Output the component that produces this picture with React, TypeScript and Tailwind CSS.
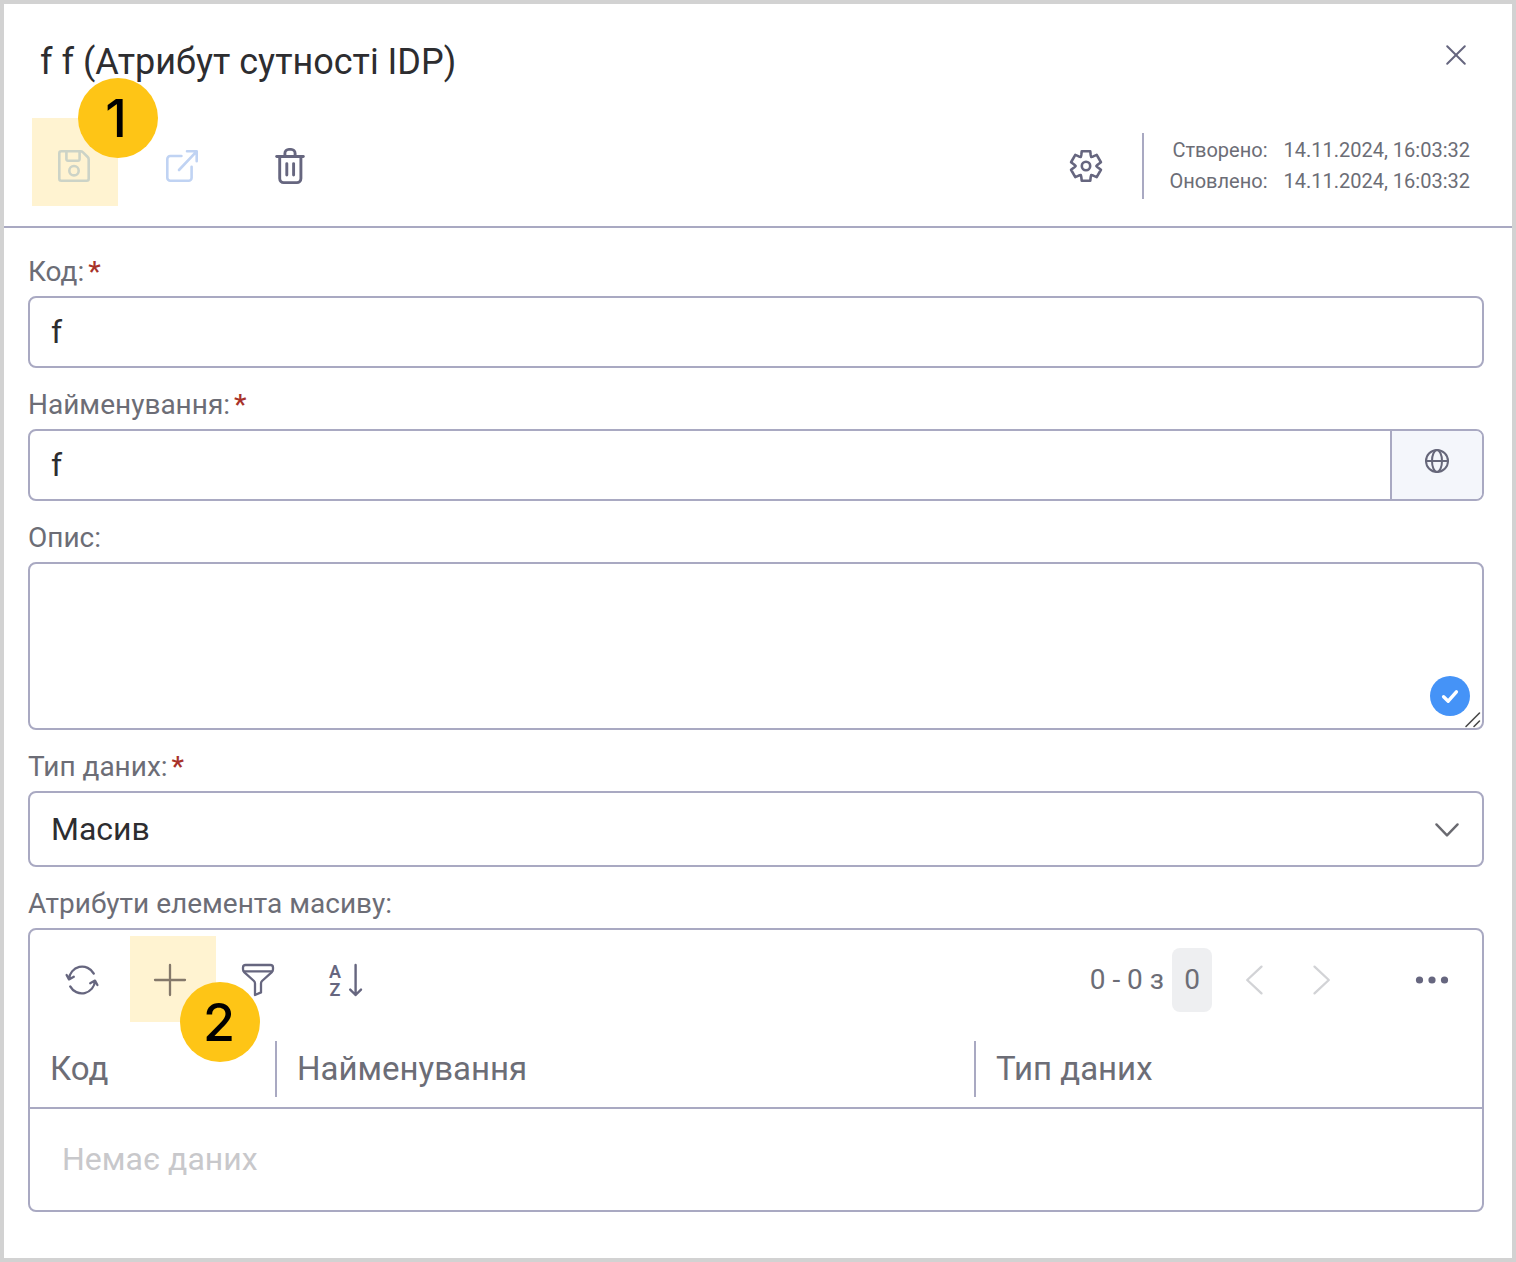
import React from "react";
import clsx from "clsx";

interface IconProps {
  className?: string;
  size?: number;
  stroke?: number;
  children: React.ReactNode;
}

function Icon({ className, size = 36, stroke = 2.6, children }: IconProps) {
  return (
    <svg
      width={size}
      height={size}
      viewBox={`0 0 ${size} ${size}`}
      fill="none"
      stroke="currentColor"
      strokeWidth={stroke}
      strokeLinecap="round"
      strokeLinejoin="round"
      aria-hidden="true"
      className={clsx("shrink-0 overflow-visible", className)}
    >
      {children}
    </svg>
  );
}

// Outline of a six-tooth gear centred in a 36px box
function gearPath() {
  const points: string[] = [];
  for (let i = 0; i < 6; i++) {
    for (const [offset, radius] of [[-23, 12], [-16, 15.4], [16, 15.4], [23, 12], [30, 10.4]]) {
      const angle = ((i * 60 + offset) * Math.PI) / 180;
      points.push(`${(18 + radius * Math.sin(angle)).toFixed(2)} ${(18 - radius * Math.cos(angle)).toFixed(2)}`);
    }
  }
  return `M${points.join("L")}Z`;
}

interface CalloutProps {
  number: number;
  className: string;
  badgeClassName: string;
}

function Callout({ number, className, badgeClassName }: CalloutProps) {
  return (
    <span className={clsx("absolute z-10 bg-[#ffc517]/20 pointer-events-none", className)}>
      <span
        className={clsx(
          "absolute size-20 rounded-full bg-[#fec516] flex items-center justify-center pt-0.5",
          "font-['Inter',sans-serif] text-[52px] leading-none font-medium text-black",
          badgeClassName
        )}
      >
        {number}
      </span>
    </span>
  );
}

interface FieldProps {
  label: string;
  htmlFor: string;
  required?: boolean;
  children: React.ReactNode;
}

function Field({ label, htmlFor, required, children }: FieldProps) {
  return (
    <div className="flex flex-col gap-1.5">
      <label htmlFor={htmlFor} className="text-[28px] leading-[37px] text-[#6c6d76]">
        {label}
        {required && <span className="ml-1 font-medium text-[#a8322a]">*</span>}
      </label>
      {children}
    </div>
  );
}

const box = "w-full border-2 border-[#a9a9c2] rounded-lg bg-white outline-none";
const toolButton = "relative h-22 w-22 flex items-center justify-center text-[#66667f]";
const headerButton = "relative h-22 w-27 flex items-center justify-center text-[#66667f]";

const columns = [
  { title: "Код", width: "w-[245px]" },
  { title: "Найменування", width: "w-[699px]" },
  { title: "Тип даних", width: "w-auto" },
];

export default function App() {
  return (
    <div className="w-full border-4 border-[#d2d2d2] bg-white font-['Roboto',sans-serif] text-[#2d2d30]">
      <header className="border-b-2 border-[#a9a9c2] pb-4">
        <div className="flex h-[118px] items-start justify-between pt-[27px] pl-9 pr-8">
          <h1 className="mt-[9px] text-4xl leading-[44px]">f f (Атрибут сутності IDP)</h1>
          <button type="button" aria-label="Закрити" className="size-12 flex items-center justify-center text-[#66667f]">
            <Icon size={24} stroke={2}>
              <path d="M3.2 3.2l17.6 17.6M20.8 3.2L3.2 20.8" />
            </Icon>
          </button>
        </div>

        <div className="flex items-center pl-4 pr-[42px]">
          <button type="button" aria-label="Зберегти" className={headerButton}>
            <Icon className="text-[#c0d8f3]">
              <path d="M5.3 3.3H24.5Q26 3.3 27 4.3L31.7 9Q32.7 10 32.7 11.4V30.7A2 2 0 0 1 30.7 32.7H5.3A2 2 0 0 1 3.3 30.7V5.3A2 2 0 0 1 5.3 3.3Z" />
              <path d="M10.4 3.6V11.2A1.5 1.5 0 0 0 11.9 12.7H22.1A1.5 1.5 0 0 0 23.6 11.2V3.6" />
              <circle cx="18" cy="22.7" r="4.7" />
            </Icon>
            <Callout number={1} className="left-3 -top-1 w-[86px] h-[88px]" badgeClassName="-top-10 -right-10 pr-1" />
          </button>
          <button type="button" aria-label="Відкрити в новому вікні" className={headerButton}>
            <Icon className="text-[#c0d3f3]">
              <path d="M17.4 8H6.3A3 3 0 0 0 3.3 11V29.7A3 3 0 0 0 6.3 32.7H24.6A3 3 0 0 0 27.6 29.7V18.8" />
              <path d="M15 22L32.4 3.6M23 3.3H32.7V13.2" />
            </Icon>
          </button>
          <button type="button" aria-label="Видалити" className={headerButton}>
            <Icon stroke={2.9}>
              <path d="M4.7 8.5H31.3" />
              <path d="M12.9 8V5.4A4 4 0 0 1 16.9 1.4H19.1A4 4 0 0 1 23.1 5.4V8" />
              <path d="M7.7 8.5V30.6A4 4 0 0 0 11.7 34.6H24.9A4 4 0 0 0 28.9 30.6V8.5" />
              <path d="M14.8 15.6V27M21.6 15.6V27" />
            </Icon>
          </button>

          <button type="button" aria-label="Налаштування" className={clsx(headerButton, "ml-auto mr-0.5")}>
            <Icon>
              <path d={gearPath()} />
              <circle cx="18" cy="18" r="4.2" />
            </Icon>
          </button>
          <dl className="grid grid-cols-[auto_auto] gap-x-4 border-l-2 border-[#a9a9c2] py-0.5 pl-[25px] text-right text-xl leading-[31px] text-[#6c6d76]">
            <dt>Створено:</dt>
            <dd>14.11.2024, 16:03:32</dd>
            <dt>Оновлено:</dt>
            <dd>14.11.2024, 16:03:32</dd>
          </dl>
        </div>
      </header>

      <main className="flex flex-col gap-[18px] pt-[25px] pb-[46px] pl-6 pr-7">
        <Field label="Код:" htmlFor="code" required>
          <input id="code" type="text" defaultValue="f" className={clsx(box, "h-18 px-[21px] text-[32px]")} />
        </Field>

        <Field label="Найменування:" htmlFor="name" required>
          <div className={clsx(box, "flex h-18 overflow-hidden")}>
            <input id="name" type="text" defaultValue="f" className="min-w-0 flex-1 px-[21px] text-[32px] outline-none" />
            <button
              type="button"
              aria-label="Переклади"
              className="w-[92px] flex items-center justify-center border-l-2 border-[#a9a9c2] bg-[#f4f6fb] pb-2 text-[#66677a]"
            >
              <Icon size={24} stroke={2}>
                <circle cx="12" cy="12" r="11" />
                <ellipse cx="12" cy="12" rx="5" ry="11" />
                <path d="M1 12H23" />
              </Icon>
            </button>
          </div>
        </Field>

        <Field label="Опис:" htmlFor="description">
          <div className="relative">
            <textarea id="description" className={clsx(box, "block h-42 resize-none px-[21px] py-3 text-[32px]")} />
            <span className="absolute right-3.5 bottom-3.5 size-10 rounded-full bg-[#4593f7] text-white">
              <Icon size={40} stroke={3.4}>
                <path d="M13.6 20.8L18.2 25.2L26.4 15.8" />
              </Icon>
            </span>
            <Icon size={16} stroke={1.6} className="absolute right-1 bottom-0.5 text-[#4a4a4a]">
              <path d="M2 14.5L15.5 1M10 14.5L15.5 9" />
            </Icon>
          </div>
        </Field>

        <Field label="Тип даних:" htmlFor="type" required>
          <div className="relative">
            <select id="type" className={clsx(box, "block h-19 appearance-none px-[21px] text-[32px]")}>
              <option>Масив</option>
            </select>
            <Icon size={24} stroke={2.4} className="absolute right-[25px] top-[27px] pointer-events-none text-[#6a6a70]">
              <path d="M1.4 6.4L12 17.4L22.6 6.4" />
            </Icon>
          </div>
        </Field>

        <section className="flex flex-col gap-1.5">
          <h2 className="text-[28px] leading-[37px] text-[#6c6d76]">Атрибути елемента масиву:</h2>
          <div className={box}>
            <div className="flex items-center px-2 py-1.5">
              <button type="button" aria-label="Оновити" className={toolButton}>
                <Icon stroke={2.3}>
                  <path d="M5 17.2A13.2 13.2 0 0 1 29.8 11.6M2.6 13L5 17.4L9.8 14.8" />
                  <path d="M31 18.8A13.2 13.2 0 0 1 6.2 24.4M33.4 23L31 18.6L26.2 21.2" />
                </Icon>
              </button>
              <button type="button" aria-label="Додати" className={toolButton}>
                <Icon stroke={2.3}>
                  <path d="M18 3V33M3 18H33" />
                </Icon>
                <Callout number={2} className="left-1 top-0 size-[86px]" badgeClassName="-bottom-10 -right-11 pr-0.5" />
              </button>
              <button type="button" aria-label="Фільтр" className={toolButton}>
                <Icon stroke={2.3}>
                  <path d="M5.6 3H30.4Q33 3 33 5.4V7.2Q33 9 31.6 10.3L22 19Q21 20 21 21.4V30.4L15 33V21.4Q15 20 14 19L4.4 10.3Q3 9 3 7.2V5.4Q3 3 5.6 3Z" />
                  <path d="M3.8 9.4H32.2" />
                </Icon>
              </button>
              <button type="button" aria-label="Сортувати" className={toolButton}>
                <Icon stroke={2.4}>
                  <text x="7" y="15.6" fontSize="18" fontWeight="600" textAnchor="middle" fill="currentColor" stroke="none">A</text>
                  <text x="7" y="33.8" fontSize="18" fontWeight="600" textAnchor="middle" fill="currentColor" stroke="none">Z</text>
                  <path d="M27.6 3V33M22.2 27.6L27.6 33L33 27.6" />
                </Icon>
              </button>

              <div className="ml-auto flex items-center text-[28px] text-[#6c6d76]">
                <span>0 - 0 з</span>
                <span className="ml-2 mr-2 flex h-16 w-10 items-center justify-center rounded-lg bg-[#eeeff1]">0</span>
              </div>
              <button type="button" aria-label="Попередня" disabled className="h-22 w-17 flex items-center justify-center text-[#d2d3d6]">
                <Icon stroke={2.3}>
                  <path d="M25.5 4.6L11.2 18L25.5 31.4" />
                </Icon>
              </button>
              <button type="button" aria-label="Наступна" disabled className="mr-[34px] h-22 w-17 flex items-center justify-center text-[#d2d3d6]">
                <Icon stroke={2.3}>
                  <path d="M10.5 4.6L24.8 18L10.5 31.4" />
                </Icon>
              </button>
              <button type="button" aria-label="Ще" className="h-22 w-21 flex items-center justify-center text-[#66667f]">
                <Icon stroke={0}>
                  <g fill="currentColor">
                    <circle cx="5.5" cy="18" r="3.6" />
                    <circle cx="18" cy="18" r="3.6" />
                    <circle cx="30.5" cy="18" r="3.6" />
                  </g>
                </Icon>
              </button>
            </div>

            <table className="w-full table-fixed text-left text-[32px]">
              <thead>
                <tr className="border-b-2 border-[#a9a9c2] text-[33px]">
                  {columns.map((column, index) => (
                    <th key={column.title} className={clsx("pt-[11px] pb-2.5 font-normal text-[#6c6d76]", column.width)}>
                      <div
                        className={clsx(
                          "flex h-14 items-center pl-5",
                          index > 0 && "border-l-2 border-[#a9a9c2]"
                        )}
                      >
                        {column.title}
                      </div>
                    </th>
                  ))}
                </tr>
              </thead>
              <tbody>
                <tr>
                  <td colSpan={3} className="h-[102px] px-8 pb-0.5 text-[#c8c8cb]">Немає даних</td>
                </tr>
              </tbody>
            </table>
          </div>
        </section>
      </main>
    </div>
  );
}
